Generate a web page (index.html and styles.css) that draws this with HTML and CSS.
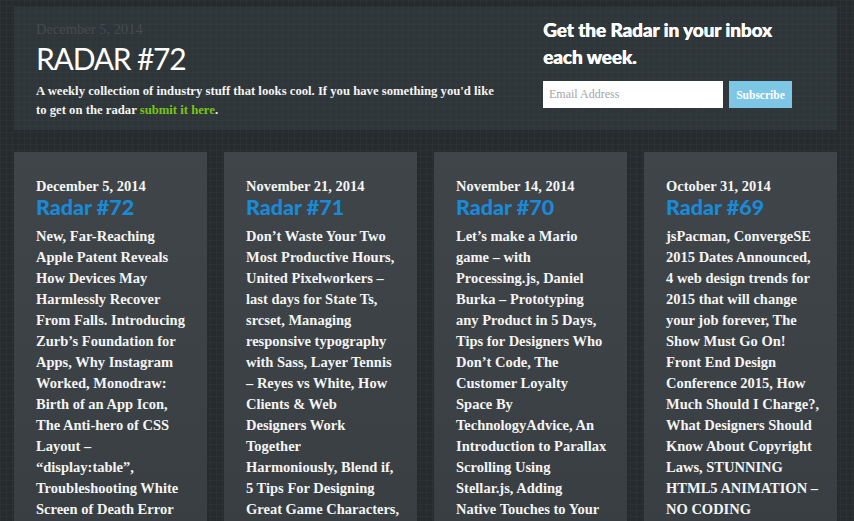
FILE: index.html
```html
<!DOCTYPE html>
<html lang="en">
<head>
  <meta charset="UTF-8" />
  <meta name="viewport" content="width=device-width, initial-scale=1.0"/>
  <title>Radar #72</title>
  <link rel="stylesheet" href="styles.css">
</head>
<body>
  <header class="intro">
    <div class="intro-main">
      <p class="intro-date">December 5, 2014</p>
      <h1>RADAR #72</h1>
      <p class="intro-text">A weekly collection of industry stuff that looks cool. If you have something you'd like to get on the radar <a href="#">submit it here</a>.</p>
    </div>
    <div class="signup">
      <h2>Get the Radar in your inbox each week.</h2>
      <form class="signup-form">
        <input type="email" placeholder="Email Address">
        <button type="button">Subscribe</button>
      </form>
    </div>
  </header>

  <main class="issues">
    <article class="issue">
      <p class="issue-date">December 5, 2014</p>
      <h3><a href="#">Radar #72</a></h3>
      <p class="issue-links">New, Far-Reaching Apple Patent Reveals How Devices May Harmlessly Recover From Falls. Introducing Zurb’s Foundation for Apps, Why Instagram Worked, Monodraw: Birth of an App Icon, The Anti-hero of CSS Layout – “display:table”, Troubleshooting White Screen of Death Error Messages in WordPress</p>
    </article>
    <article class="issue">
      <p class="issue-date">November 21, 2014</p>
      <h3><a href="#">Radar #71</a></h3>
      <p class="issue-links">Don’t Waste Your Two Most Productive Hours, United Pixelworkers – last days for State Ts, srcset, Managing responsive typography with Sass, Layer Tennis – Reyes vs White, How Clients &amp; Web Designers Work Together<br>Harmoniously, Blend if, 5 Tips For Designing Great Game Characters, Flat Design Trends</p>
    </article>
    <article class="issue">
      <p class="issue-date">November 14, 2014</p>
      <h3><a href="#">Radar #70</a></h3>
      <p class="issue-links">Let’s make a Mario game – with Processing.js, Daniel Burka – Prototyping any Product in 5 Days, Tips for Designers Who Don’t Code, The Customer Loyalty<br>Space By TechnologyAdvice, An Introduction to Parallax Scrolling Using Stellar.js, Adding<br>Native Touches to Your Web App</p>
    </article>
    <article class="issue">
      <p class="issue-date">October 31, 2014</p>
      <h3><a href="#">Radar #69</a></h3>
      <p class="issue-links">jsPacman, ConvergeSE 2015 Dates Announced, 4 web design trends for 2015 that will change your job forever, The Show Must Go On! Front End Design Conference 2015, How Much Should I Charge?, What Designers Should Know About Copyright Laws, STUNNING HTML5 ANIMATION – NO CODING</p>
    </article>
  </main>
</body>
</html>
```

FILE: styles.css
```css
/* Global */
body {
  margin: 0;
  padding: 7px 17px 0 14px;
  background-color: #262b2e;
  background-image:
    repeating-linear-gradient(0deg, rgba(255,255,255,0.025) 0 1px, transparent 1px 6px),
    repeating-linear-gradient(90deg, rgba(255,255,255,0.025) 0 1px, transparent 1px 6px);
  font-family: "Liberation Serif", serif;
  color: #f4f4f4;
}

p, h1, h2, h3 {
  margin: 0;
}

/* Intro panel */
.intro {
  display: grid;
  grid-template-columns: 465px 1fr;
  column-gap: 42px;
  padding: 12px 22px 10px;
  background: rgba(60, 68, 72, 0.45);
}

.intro-date {
  font-size: 14.5px;
  line-height: 20px;
  color: #454b4e;
}

.intro h1 {
  margin-top: 1px;
  font-family: Lato, sans-serif;
  font-weight: 400;
  font-size: 30px;
  line-height: 36px;
  letter-spacing: -1.2px;
  color: #fff;
}

.intro-text {
  margin-top: 6px;
  font-size: 12.7px;
  line-height: 19px;
  font-weight: bold;
}

.intro-text a {
  color: #79c516;
  text-decoration: none;
}

/* Signup */
.signup h2 {
  margin-top: -3px;
  font-family: Lato, sans-serif;
  font-weight: 900;
  font-size: 19px;
  line-height: 27px;
  letter-spacing: -0.1px;
  color: #fff;
  text-shadow: 0.4px 0 0 #fff;
}

.signup-form {
  display: flex;
  gap: 6px;
  margin-top: 11px;
}

.signup-form input {
  width: 180px;
  height: 27px;
  box-sizing: border-box;
  border: none;
  padding: 0 6px;
  font-family: "Liberation Serif", serif;
  font-size: 12px;
}

.signup-form input::placeholder {
  color: #a5a5a5;
}

.signup-form button {
  width: 63px;
  height: 27px;
  border: none;
  padding: 0;
  background: #7ec6e6;
  color: #fff;
  font-family: "Liberation Serif", serif;
  font-weight: bold;
  font-size: 11.5px;
}

/* Issue cards */
.issues {
  display: grid;
  grid-template-columns: repeat(4, 193px);
  column-gap: 17px;
  margin-top: 22px;
}

.issue {
  padding: 25px 17px 30px 22px;
  min-height: 400px;
  background: linear-gradient(#3f4548, #373d40);
}

.issue-date {
  font-size: 14.5px;
  line-height: 18px;
  font-weight: bold;
}

.issue h3 {
  font-family: Lato, sans-serif;
  font-weight: 900;
  font-size: 21.5px;
  line-height: 24px;
}

.issue h3 a {
  color: #1a8ad8;
  text-decoration: none;
}

.issue-links {
  margin-top: 7px;
  font-size: 14.5px;
  line-height: 21px;
  font-weight: bold;
}
```
